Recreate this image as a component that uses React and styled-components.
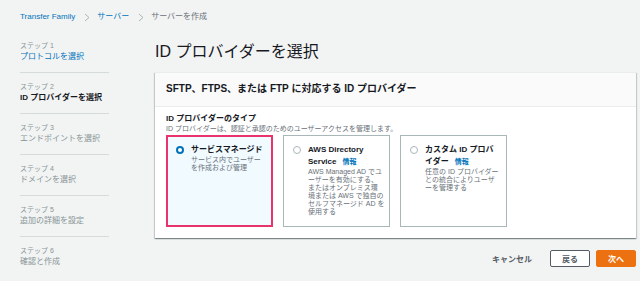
import styled, { createGlobalStyle } from "styled-components";

const GlobalStyle = createGlobalStyle`
  html, body {
    margin: 0;
    padding: 0;
    background: #f2f3f3;
    overflow: hidden;
  }
  body {
    font-family: "Liberation Sans", "Noto Sans CJK JP", sans-serif;
    color: #16191f;
  }
`;

const Page = styled.div`
  width: 640px;
  height: 281px;
  box-sizing: border-box;
  padding: 11px 4px 0 20px;
`;

const Breadcrumbs = styled.nav`
  display: flex;
  align-items: center;
  height: 12px;
  font-size: 8px;
  line-height: 12px;
`;

const Crumb = styled.span`
  color: ${(props) => (props.current ? "#687078" : "#0073bb")};
`;

const Chevron = styled.svg`
  width: 6px;
  height: 9px;
  margin: 0 7px 0 9px;
`;

const Layout = styled.div`
  display: grid;
  grid-template-columns: 89px 1fr;
  column-gap: 46px;
  margin-top: 18px;
`;

const StepList = styled.ul`
  list-style: none;
  margin: 0;
  padding: 0;
`;

const Step = styled.li`
  padding: 0 0 9px;
  border-bottom: 1px solid #d5dbdb;
  & + & {
    padding-top: 9px;
  }
  &:last-child {
    border-bottom: none;
  }
`;

const StepLabel = styled.div`
  font-size: 7px;
  line-height: 10px;
  color: #879596;
`;

const StepName = styled.div`
  font-size: 8px;
  line-height: 12px;
  color: ${(props) =>
    props.state === "done" ? "#0073bb" : props.state === "active" ? "#16191f" : "#879596"};
  font-weight: ${(props) => (props.state === "active" ? 700 : 400)};
`;

const Main = styled.main`
  display: flex;
  flex-direction: column;
`;

const Title = styled.h1`
  margin: 0 0 9px;
  font-size: 16px;
  line-height: 22px;
  font-weight: 400;
  color: #16191f;
`;

const Container = styled.section`
  background: #fff;
  border-top: 1px solid #eaeded;
  box-shadow: 0 1px 1px 0 rgba(0, 28, 36, 0.3), 1px 1px 1px 0 rgba(0, 28, 36, 0.15),
    -1px 1px 1px 0 rgba(0, 28, 36, 0.15);
`;

const Header = styled.header`
  background: #fafafa;
  border-bottom: 1px solid #eaeded;
  padding: 9px 11px 10px;
  font-size: 10px;
  line-height: 14px;
  font-weight: 700;
`;

const Body = styled.div`
  padding: 7px 11px 11px;
`;

const FieldLabel = styled.div`
  font-size: 8px;
  line-height: 10px;
  font-weight: 600;
  color: #16191f;
`;

const FieldHint = styled.div`
  font-size: 7px;
  line-height: 10px;
  color: #687078;
`;

const Tiles = styled.div`
  display: grid;
  grid-template-columns: repeat(3, 107px);
  column-gap: 10px;
  margin-top: 1px;
`;

const Tile = styled.div`
  box-sizing: border-box;
  height: 92px;
  display: flex;
  gap: 7px;
  background: ${(props) => (props.selected ? "#f1faff" : "#fff")};
  border: ${(props) => (props.selected ? "2px solid #e8336d" : "1px solid #aab7b8")};
  padding: ${(props) => (props.selected ? "7px 7px 7px 8px" : "8px 8px 8px 9px")};
`;

const Radio = styled.span`
  flex: none;
  box-sizing: border-box;
  width: 8px;
  height: 8px;
  margin-top: 2px;
  border-radius: 50%;
  background: #fff;
  border: ${(props) => (props.checked ? "2.5px solid #0073bb" : "1px solid #aab7b8")};
`;

const TileText = styled.div`
  white-space: nowrap;
`;

const TileTitle = styled.div`
  font-size: 8px;
  line-height: 12px;
  font-weight: 700;
  color: #16191f;
`;

const InfoLink = styled.span`
  margin-left: 6px;
  font-size: 7px;
  color: #0073bb;
`;

const TileDesc = styled.div`
  font-size: 7px;
  line-height: 8px;
  color: #687078;
`;

const Footer = styled.div`
  display: flex;
  justify-content: flex-end;
  align-items: center;
  gap: 6px;
  margin-top: 12px;
`;

const TextButton = styled.span`
  margin-right: 12px;
  font-size: 8px;
  font-weight: 700;
  color: #545b64;
`;

const Button = styled.button`
  box-sizing: border-box;
  width: 40px;
  height: 17px;
  padding: 0;
  font-family: inherit;
  font-size: 8px;
  font-weight: 700;
  border: 1px solid ${(props) => (props.primary ? "#ec7211" : "#545b64")};
  background: ${(props) => (props.primary ? "#ec7211" : "#fff")};
  color: ${(props) => (props.primary ? "#fff" : "#545b64")};
  border-radius: 2px;
`;

const ChevronIcon = () => (
  <Chevron viewBox="0 0 6 9">
    <path d="M1 1l4 3.5L1 8" fill="none" stroke="#aab7b8" strokeWidth="1" />
  </Chevron>
);

const steps = [
  { n: 1, name: "プロトコルを選択", state: "done" },
  { n: 2, name: "ID プロバイダーを選択", state: "active" },
  { n: 3, name: "エンドポイントを選択" },
  { n: 4, name: "ドメインを選択" },
  { n: 5, name: "追加の詳細を設定" },
  { n: 6, name: "確認と作成" },
];

const tiles = [
  {
    title: ["サービスマネージド"],
    desc: ["サービス内でユーザー", "を作成および管理"],
    selected: true,
  },
  {
    title: ["AWS Directory", "Service"],
    info: true,
    desc: [
      "AWS Managed AD でユ",
      "ーザーを有効にする、",
      "またはオンプレミス環",
      "境または AWS で独自の",
      "セルフマネージド AD を",
      "使用する",
    ],
  },
  {
    title: ["カスタム ID プロバ", "イダー"],
    info: true,
    desc: ["任意の ID プロバイダー", "との統合によりユーザ", "ーを管理する"],
  },
];

export default function App() {
  return (
    <>
      <GlobalStyle />
      <Page>
        <Breadcrumbs>
          <Crumb>Transfer Family</Crumb>
          <ChevronIcon />
          <Crumb>サーバー</Crumb>
          <ChevronIcon />
          <Crumb current>サーバーを作成</Crumb>
        </Breadcrumbs>
        <Layout>
          <StepList>
            {steps.map((s) => (
              <Step key={s.n}>
                <StepLabel>ステップ {s.n}</StepLabel>
                <StepName state={s.state}>{s.name}</StepName>
              </Step>
            ))}
          </StepList>
          <Main>
            <Title>ID プロバイダーを選択</Title>
            <Container>
              <Header>SFTP、FTPS、または FTP に対応する ID プロバイダー</Header>
              <Body>
                <FieldLabel>ID プロバイダーのタイプ</FieldLabel>
                <FieldHint>
                  ID プロバイダーは、認証と承認のためのユーザーアクセスを管理します。
                </FieldHint>
                <Tiles>
                  {tiles.map((t, i) => (
                    <Tile key={i} selected={t.selected}>
                      <Radio checked={t.selected} />
                      <TileText>
                        {t.title.map((line, j) => (
                          <TileTitle key={j}>
                            {line}
                            {t.info && j === t.title.length - 1 && <InfoLink>情報</InfoLink>}
                          </TileTitle>
                        ))}
                        {t.desc.map((line, j) => (
                          <TileDesc key={j}>{line}</TileDesc>
                        ))}
                      </TileText>
                    </Tile>
                  ))}
                </Tiles>
              </Body>
            </Container>
            <Footer>
              <TextButton>キャンセル</TextButton>
              <Button>戻る</Button>
              <Button primary>次へ</Button>
            </Footer>
          </Main>
        </Layout>
      </Page>
    </>
  );
}
